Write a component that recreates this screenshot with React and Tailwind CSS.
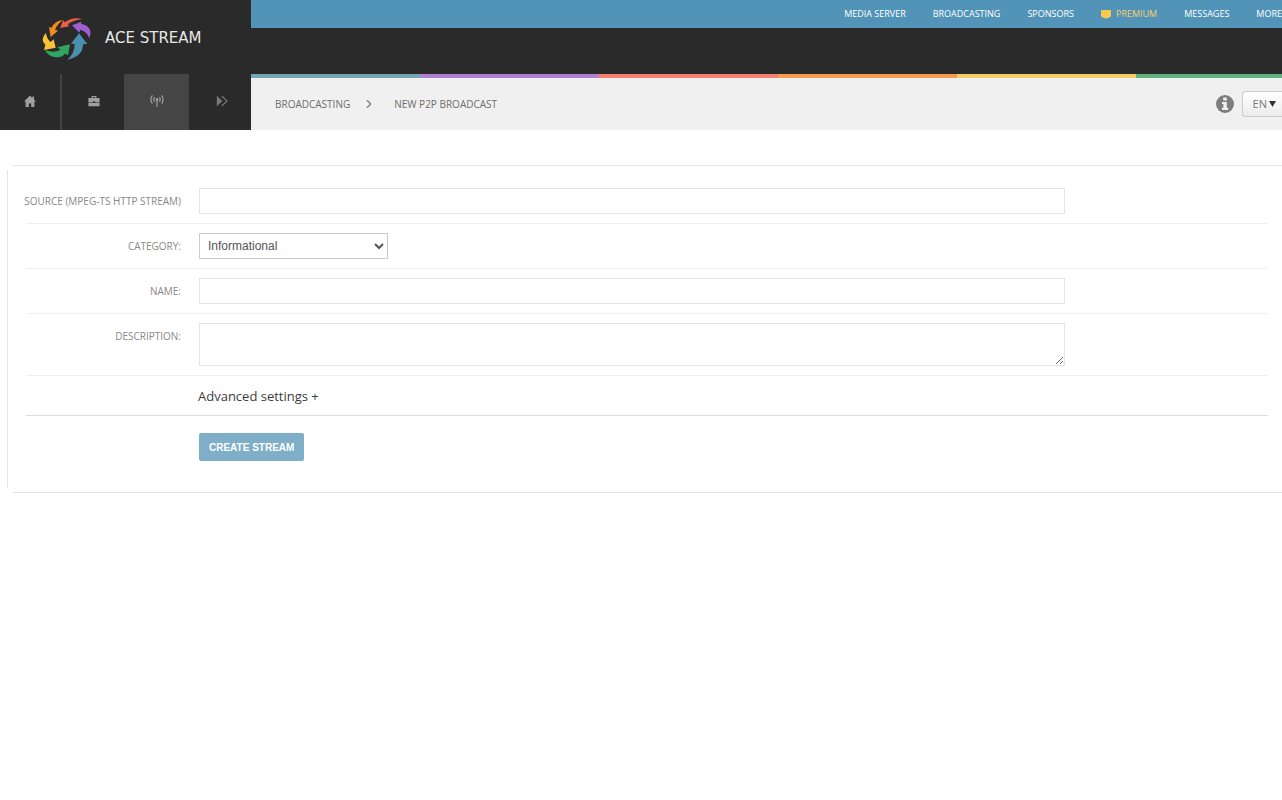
import { ChevronRight } from "lucide-react";
import { clsx } from "clsx";

const topLinks = ["Media server", "Broadcasting", "Sponsors", "Premium", "Messages", "More"];

const stripes = [
  "bg-[#b07fd0]",
  "bg-[#f4806f]",
  "bg-[#f79a4b]",
  "bg-[#f6cc66]",
  "bg-[#5fb37f]",
  "bg-[#78a5b3]",
  "bg-[#b07fd0]",
  "bg-[#f4806f]",
];

const LogoMark = () => (
  <svg viewBox="126 51 150 132" className="w-[50px] h-[44px]" aria-hidden="true">
    <path fill="#ee5f4b" d="M180 84L190 61L195 67Q217 50 246 57Q222 60 203 73L208 79Z" />
    <path fill="#f28c1e" d="M152 111L147 80L154 84Q165 62 189 61Q173 71 165 89L174 92Z" />
    <path fill="#fbc235" d="M138 98Q119 119 136 135L132 150L167 143L161 118L152 126Q139 115 138 98Z" />
    <path fill="#2fa562" d="M135 149Q146 176 180 171Q190 169 194 161L204 165L210 133L172 142L182 149Q160 161 135 149Z" />
    <path fill="#4b8fae" d="M202 179Q224 160 224 132L213 131L237 100L262 132L249 133Q249 170 202 179Z" />
    <path fill="#9c5fd0" d="M268 115Q261 94 241 89L238 98L216 76L244 65L243 71Q281 79 268 115Z" />
  </svg>
);

const HomeIcon = () => (
  <svg viewBox="0 0 12 12" className="w-3 h-3" fill="currentColor" aria-hidden="true">
    <path d="M6 0.5L8.4 2.9V1.4H10V4.5L12 6.6H10.4V12H7.2V8.4H4.8V12H1.6V6.6H0Z" />
  </svg>
);

const BriefcaseIcon = () => (
  <svg viewBox="0 0 12 12" className="w-3 h-3" fill="currentColor" aria-hidden="true">
    <path d="M3.6 3V1H8.4V3H11.6V7H7.2V6.4H4.8V7H0.4V3ZM4.8 3H7.2V2.1H4.8ZM0.4 7.6H4.8V8.1H7.2V7.6H11.6V11.2H0.4Z" />
  </svg>
);

const AntennaIcon = () => (
  <svg viewBox="0 0 14 14" className="w-3.5 h-3.5" fill="none" stroke="currentColor" aria-hidden="true">
    <circle cx="7" cy="5.5" r="1.4" fill="currentColor" stroke="none" />
    <path
      strokeWidth="1.2"
      d="M7 5.5V13M4.6 3.2Q3 5.5 4.6 7.8M9.4 3.2Q11 5.5 9.4 7.8M2.4 1.4Q-0.6 5.5 2.4 9.6M11.6 1.4Q14.6 5.5 11.6 9.6"
    />
  </svg>
);

const ForwardIcon = () => (
  <svg viewBox="0 0 12 12" className="w-3 h-3" fill="none" stroke="currentColor" aria-hidden="true">
    <path d="M0.8 0.8V11.2L6.4 6Z" fill="currentColor" stroke="none" />
    <path strokeWidth="1.2" d="M5.8 1L11 6L5.8 11" />
  </svg>
);

const mainNav = [
  { label: "Home", icon: HomeIcon, cell: "w-[62px] border-r-2 border-[#444]" },
  { label: "Portfolio", icon: BriefcaseIcon, cell: "w-[62px] pl-0.5" },
  { label: "Broadcast", icon: AntennaIcon, cell: "w-[65px] bg-[#454545]" },
  { label: "Player", icon: ForwardIcon, cell: "w-[62px] pl-1 text-[#777]" },
];

const Header = () => (
  <header className="flex bg-[#2a2a2a]">
    <div className="w-[251px] shrink-0">
      <a href="#" className="flex items-center gap-[13px] h-[74px] pl-[42px] pt-1">
        <LogoMark />
        <span className="pb-0.5 font-['DejaVu_Sans',sans-serif] text-[15px] text-[#e8e8e8] whitespace-nowrap">
          ACE STREAM
        </span>
      </a>
      <nav className="flex h-14 text-[#a0a0a0]">
        {mainNav.map(({ label, icon: Icon, cell }) => (
          <a
            key={label}
            href="#"
            aria-label={label}
            className={clsx("flex items-center justify-center pb-0.5", cell)}
          >
            <Icon />
          </a>
        ))}
      </nav>
    </div>

    <div className="flex-1 min-w-0">
      <nav className="flex items-center justify-end gap-[27px] h-7 bg-[#5294b7] text-[9px] font-medium text-white uppercase">
        {topLinks.map((item) =>
          item === "Premium" ? (
            <a key={item} href="#" className="flex items-center gap-[5px] font-normal text-[#f8cf6d]">
              <svg viewBox="0 0 10 9" className="w-2.5 h-[9px]" fill="#fbc84e" aria-hidden="true">
                <path d="M0 0H10V6.5L7 8H6L5 9L4 8H3L0 6.5Z" />
              </svg>
              {item}
            </a>
          ) : (
            <a key={item} href="#">
              {item}
            </a>
          )
        )}
      </nav>

      <div className="h-[46px]" />

      <div className="flex h-1 overflow-hidden">
        <div className="w-[169px] shrink-0 bg-[#78a5b3]" />
        {stripes.map((color, i) => (
          <div key={i} className={clsx("w-[179px] shrink-0", color)} />
        ))}
      </div>

      <div className="flex items-center h-[52px] bg-[#f0f0f0] pl-6 text-[10px] text-[#6d6d6d] uppercase">
        <a href="#">Broadcasting</a>
        <ChevronRight className="w-3.5 h-3.5 ml-3 mr-[18px] text-[#777]" />
        <span>New P2P broadcast</span>
        <button type="button" aria-label="Info" className="ml-auto mr-2">
          <svg viewBox="0 0 18 18" className="w-[18px] h-[18px]" aria-hidden="true">
            <circle cx="9" cy="9" r="9" fill="#7d7d7d" />
            <path
              fill="#f0f0f0"
              d="M7.2 2.6H10.8V5.6H7.2ZM6 6.9H10.8V12.8H12.2V15H6V12.8H7.4V9H6Z"
            />
          </svg>
        </button>
        <button
          type="button"
          className="flex items-center gap-0.5 h-[26px] pl-2.5 pr-1.5 border border-r-0 border-[#ccc] rounded-l-sm bg-linear-to-b from-white to-[#ececec] text-[11px] text-[#777]"
        >
          EN
          <svg viewBox="0 0 7 6" className="w-[7px] h-1.5" fill="#333" aria-hidden="true">
            <path d="M0 0H7L3.5 6Z" />
          </svg>
        </button>
      </div>
    </div>
  </header>
);

const Row = ({ label, id, children }) => (
  <div className="flex items-start gap-[18px] py-[9px] border-b border-[#f0f0f0]">
    <label
      htmlFor={id}
      className="flex justify-end w-[155px] shrink-0 text-[10px] leading-[26px] text-[#888] uppercase whitespace-nowrap"
    >
      {label}
    </label>
    <div className="flex-1">{children}</div>
  </div>
);

const App = () => {
  return (
    <div className="min-h-screen bg-white font-['Open_Sans',sans-serif]">
      <Header />

      {/* Form panel, open on the right side */}
      <main className="mt-[35px] ml-[13px] border-y border-[#e4e4e4]">
        <form
          className="my-1 -ml-1.5 pl-[18px] pr-3.5 pt-[9px] pb-[27px] border-l border-[#e4e4e4]"
          onSubmit={(e) => e.preventDefault()}
        >
          <Row label="Source (MPEG-TS HTTP stream)" id="source">
            <input id="source" type="text" className="block w-[81%] h-[26px] px-2 border border-[#e4e4e4] text-[13px]" />
          </Row>
          <Row label="Category:" id="category">
            <select
              id="category"
              className="block w-[189px] h-[26px] pl-1 border border-[#ccc] bg-white font-['Liberation_Sans',sans-serif] text-[12px] text-[#555]"
            >
              <option>Informational</option>
            </select>
          </Row>
          <Row label="Name:" id="name">
            <input id="name" type="text" className="block w-[81%] h-[26px] px-2 border border-[#e4e4e4] text-[13px]" />
          </Row>
          <Row label="Description:" id="description">
            <textarea id="description" className="block w-[81%] h-[43px] px-2 border border-[#e4e4e4] text-[13px]" />
          </Row>

          <div className="pl-[172px] pt-2.5 pb-[7px] border-b border-[#dcdcdc]">
            <button type="button" className="block h-[22px] text-[13px] text-[#3c3c3c]">
              Advanced settings +
            </button>
          </div>

          <div className="pl-[173px] pt-[17px]">
            <button
              type="submit"
              className="block h-7 px-2.5 rounded-xs bg-[#7eaec8] font-['Liberation_Sans',sans-serif] text-[10px] font-bold text-white uppercase"
            >
              Create stream
            </button>
          </div>
        </form>
      </main>
    </div>
  );
};

export default App;
